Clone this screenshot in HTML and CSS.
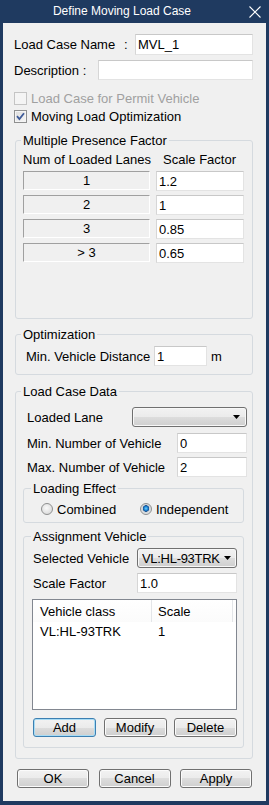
FILE: index.html
```html
<!DOCTYPE html>
<html lang="en">
<head>
    <meta charset="UTF-8">
    <meta name="viewport" content="width=device-width, initial-scale=1.0">
    <title>Define Moving Load Case</title>
    <link rel="stylesheet" href="styles.css">
</head>
<body>
    <div class="window">
        <div class="titlebar">
            <span class="title">Define Moving Load Case</span>
            <span class="close">
                <svg width="12" height="12" viewBox="0 0 12 12"><path d="M0.5 0.5 L11.5 11.5 M11.5 0.5 L0.5 11.5" stroke="#fff" stroke-width="1.1" fill="none"/></svg>
            </span>
        </div>

        <div class="dialog">
            <div class="row row-name">
                <span class="lbl lbl-name">Load Case Name</span><span class="colon">:</span>
                <input class="edit edit-name" type="text" value="MVL_1">
            </div>
            <div class="row row-desc">
                <span class="lbl lbl-desc">Description :</span>
                <input class="edit edit-desc" type="text" value="">
            </div>
            <div class="row check-row check-first disabled">
                <span class="check"></span><span>Load Case for Permit Vehicle</span>
            </div>
            <div class="row check-row">
                <span class="check checked">
                    <svg width="11" height="11" viewBox="0 0 11 11"><path d="M2 5.2 L4.4 8 L9 2.2" stroke="#3d5a98" stroke-width="1.8" fill="none"/></svg>
                </span><span>Moving Load Optimization</span>
            </div>

            <!-- Multiple Presence Factor -->
            <div class="group group-mpf">
                <div class="legend">Multiple Presence Factor</div>
                <div class="mpf-head"><span class="mpf-col">Num of Loaded Lanes</span><span>Scale Factor</span></div>
                <div class="mpf-row mpf-first"><span class="lane">1</span><input class="edit factor" type="text" value="1.2"></div>
                <div class="mpf-row"><span class="lane">2</span><input class="edit factor" type="text" value="1"></div>
                <div class="mpf-row"><span class="lane">3</span><input class="edit factor" type="text" value="0.85"></div>
                <div class="mpf-row"><span class="lane">&gt; 3</span><input class="edit factor" type="text" value="0.65"></div>
            </div>

            <!-- Optimization -->
            <div class="group group-opt">
                <div class="legend">Optimization</div>
                <div class="row opt-row">
                    <span class="lbl lbl-dist">Min. Vehicle Distance</span>
                    <input class="edit edit-dist" type="text" value="1">
                    <span class="unit">m</span>
                </div>
            </div>

            <!-- Load Case Data -->
            <div class="group group-lcd">
                <div class="legend">Load Case Data</div>
                <div class="row lcd-row lane-row">
                    <span class="lbl lbl-lane">Loaded Lane</span>
                    <div class="combo combo-lane">
                        <span class="combo-text"></span>
                        <svg width="7" height="4" viewBox="0 0 7 4"><path d="M0 0 L7 0 L3.5 4 Z" fill="#000"/></svg>
                    </div>
                </div>
                <div class="row lcd-row min-row">
                    <span class="lbl lbl-num">Min. Number of Vehicle</span>
                    <input class="edit edit-num" type="text" value="0">
                </div>
                <div class="row lcd-row max-row">
                    <span class="lbl lbl-num">Max. Number of Vehicle</span>
                    <input class="edit edit-num" type="text" value="2">
                </div>

                <div class="group inner-group group-effect">
                    <div class="legend">Loading Effect</div>
                    <div class="row radio-row">
                        <span class="radio"></span><span class="radio-lbl radio-lbl-first">Combined</span>
                        <span class="radio on"></span><span class="radio-lbl">Independent</span>
                    </div>
                </div>

                <div class="group inner-group group-assign">
                    <div class="legend">Assignment Vehicle</div>
                    <div class="row av-row vehicle-row">
                        <span class="lbl lbl-av">Selected Vehicle</span>
                        <div class="combo combo-vehicle">
                            <span class="combo-text">VL:HL-93TRK</span>
                            <svg width="7" height="4" viewBox="0 0 7 4"><path d="M0 0 L7 0 L3.5 4 Z" fill="#000"/></svg>
                        </div>
                    </div>
                    <div class="row av-row scale-row">
                        <span class="lbl lbl-av">Scale Factor</span>
                        <input class="edit edit-scale" type="text" value="1.0">
                    </div>
                    <div class="list">
                        <div class="list-head">
                            <span class="col col-class">Vehicle class</span>
                            <span class="col col-scale">Scale</span>
                        </div>
                        <div class="list-row">
                            <span class="col col-class">VL:HL-93TRK</span>
                            <span class="col col-scale">1</span>
                        </div>
                    </div>
                    <div class="btn-row">
                        <button class="btn btn-small default">Add</button>
                        <button class="btn btn-small">Modify</button>
                        <button class="btn btn-small">Delete</button>
                    </div>
                </div>
            </div>

            <div class="dialog-buttons">
                <button class="btn btn-main">OK</button>
                <button class="btn btn-main">Cancel</button>
                <button class="btn btn-main">Apply</button>
            </div>
        </div>
    </div>
</body>
</html>
```

FILE: styles.css
```css
/* General */
body {
    margin: 0;
    font-family: "Liberation Sans", Arial, sans-serif;
    font-size: 13px;
    color: #000;
    background: #1f3a60;
}
input, button {
    font-family: "Liberation Sans", Arial, sans-serif;
    font-size: 13px;
    color: #000;
}

/* Window frame */
.window {
    width: 269px;
    height: 805px;
    background: #1f3a60;
    display: flex;
    flex-direction: column;
}
.titlebar {
    height: 23px;
    display: flex;
    align-items: center;
    color: #fff;
}
.title {
    flex: 1;
    text-align: center;
    font-size: 12px;
    line-height: 23px;
}
.close {
    width: 25px;
    padding-left: 5px;
    box-sizing: border-box;
    display: flex;
    align-items: center;
}
.dialog {
    margin: 0 3px;
    height: 778px;
    background: #f0f0f0;
    padding: 11px 13px 0 11px;
    box-sizing: border-box;
}

/* Rows and labels */
.row {
    display: flex;
    align-items: center;
}
.lbl {
    white-space: nowrap;
    flex-shrink: 0;
}
.edit {
    background: #fff;
    border: 1px solid #e3e3e3;
    border-top-color: #c8c8c8;
    border-left-color: #d6d6d6;
    padding: 0 2px;
    margin: 0;
    box-sizing: border-box;
    outline: none;
}

.row-name {
    height: 21px;
}
.lbl-name {
    width: 110px;
}
.colon {
    width: 11px;
}
.edit-name {
    width: 118px;
    height: 21px;
}
.row-desc {
    height: 20px;
    margin-top: 5px;
}
.lbl-desc {
    width: 84px;
}
.edit-desc {
    width: 155px;
    height: 20px;
}

/* Check boxes */
.check-row {
    height: 18px;
}
.check-first {
    margin-top: 9px;
}
.check {
    width: 13px;
    height: 13px;
    box-sizing: border-box;
    border: 1px solid #8e8f8f;
    background: linear-gradient(135deg, #dcdcdc, #f6f6f6);
    box-shadow: inset 0 0 0 1px #f4f4f4;
    margin-right: 4px;
    display: flex;
    align-items: center;
    justify-content: center;
}
.disabled {
    color: #a0a0a0;
}
.disabled .check {
    border-color: #c4c4c4;
    background: #f4f4f4;
}

/* Group boxes */
.group {
    border: 1px solid #d5dadf;
    border-radius: 3px;
    box-sizing: border-box;
    margin-left: 1px;
}
.legend {
    display: table;
    margin: -8px 0 0 5px;
    padding: 0 2px;
    background: #f0f0f0;
    line-height: 15px;
}

/* Multiple Presence Factor */
.group-mpf {
    height: 179px;
    margin-top: 15px;
}
.mpf-head {
    display: flex;
    height: 18px;
    line-height: 18px;
    margin: 3px 0 0 7px;
}
.mpf-col {
    width: 140px;
}
.mpf-row {
    display: flex;
    height: 19px;
    margin: 5px 0 0 7px;
}
.mpf-first {
    margin-top: 2px;
}
.lane {
    width: 127px;
    height: 19px;
    box-sizing: border-box;
    border: 1px solid #fff;
    border-top-color: #a0a0a0;
    border-left-color: #a0a0a0;
    text-align: center;
    line-height: 17px;
}
.factor {
    width: 88px;
    height: 20px;
    margin-left: 6px;
}

/* Optimization */
.group-opt {
    height: 41px;
    margin-top: 15px;
}
.opt-row {
    height: 20px;
    margin: 4px 0 0 10px;
}
.lbl-dist {
    width: 128px;
}
.edit-dist {
    width: 53px;
    height: 20px;
}
.unit {
    margin-left: 4px;
}

/* Load Case Data */
.group-lcd {
    height: 368px;
    margin-top: 16px;
}
.lcd-row {
    margin-left: 11px;
    height: 20px;
}
.lane-row {
    margin-top: 8px;
}
.lbl-lane {
    width: 105px;
}
.min-row {
    margin-top: 6px;
}
.max-row {
    margin-top: 4px;
}
.lbl-num {
    width: 150px;
}
.edit-num {
    width: 70px;
    height: 20px;
}

.combo {
    height: 20px;
    box-sizing: border-box;
    border: 1px solid #707070;
    border-radius: 3px;
    background: linear-gradient(#f2f2f2, #ebebeb 50%, #dddddd 50%, #cfcfcf);
    box-shadow: inset 0 0 0 1px #f8f8f8;
    display: flex;
    align-items: center;
    padding: 0 6px 0 4px;
}
.combo svg {
    flex-shrink: 0;
    margin-left: 3px;
}
.combo-text {
    flex: 1;
    white-space: nowrap;
    overflow: hidden;
}
.combo-lane {
    width: 115px;
}

.inner-group {
    margin: 0 8px 0 7px;
}
.inner-group .legend {
    margin-left: 7px;
}

/* Loading Effect */
.group-effect {
    height: 35px;
    margin-top: 11px;
}
.radio-row {
    height: 16px;
    margin: 5px 0 0 17px;
}
.radio {
    width: 12px;
    height: 12px;
    box-sizing: border-box;
    border-radius: 50%;
    border: 1px solid #8e8f8f;
    background: radial-gradient(circle at 45% 40%, #fafafa, #d2d2d2);
}
.radio.on {
    background: radial-gradient(circle at 50% 45%, #6fd3ff 0, #1a7fd0 2px, #174d8c 3px, #cfd4d8 3.5px, #f4f4f4 100%);
}
.radio-lbl {
    margin-left: 4px;
}
.radio-lbl-first {
    width: 83px;
}

/* Assignment Vehicle */
.group-assign {
    height: 212px;
    margin-top: 13px;
}
.av-row {
    margin-left: 9px;
}
.lbl-av {
    width: 104px;
}
.vehicle-row {
    height: 20px;
    margin-top: 4px;
}
.combo-vehicle {
    width: 100px;
    padding-left: 4px;
    padding-right: 5px;
}
.combo-vehicle .combo-text {
    letter-spacing: -0.3px;
}
.scale-row {
    height: 20px;
    margin-top: 5px;
}
.edit-scale {
    width: 100px;
    height: 20px;
}

.list {
    width: 205px;
    height: 111px;
    margin: 6px 0 0 8px;
    box-sizing: border-box;
    border: 1px solid #828790;
    background: #fff;
}
.list-head {
    display: flex;
    height: 22px;
    background: linear-gradient(#fff, #fbfbfb);
}
.list-row {
    display: flex;
    height: 18px;
}
.col {
    display: flex;
    align-items: center;
    box-sizing: border-box;
    white-space: nowrap;
}
.col-class {
    width: 119px;
    padding-left: 7px;
}
.col-scale {
    width: 81px;
    padding-left: 6px;
}
.list-head .col {
    border-right: 1px solid #e3e5e8;
}

/* Buttons */
.btn {
    height: 19px;
    padding: 0;
    box-sizing: border-box;
    border: 1px solid #707070;
    border-radius: 3px;
    background: linear-gradient(#f2f2f2, #ebebeb 50%, #dddddd 50%, #cfcfcf);
    box-shadow: inset 0 0 0 1px #fbfbfb;
    line-height: 17px;
    cursor: pointer;
}
.btn.default {
    border-color: #3c7fb1;
    box-shadow: inset 0 0 0 1px #a8dcf5;
}
.btn-row {
    display: flex;
    justify-content: space-between;
    width: 204px;
    margin: 8px 0 0 9px;
}
.btn-small {
    width: 63px;
}
.dialog-buttons {
    display: flex;
    justify-content: space-between;
    width: 235px;
    margin: 10px 0 0 3px;
}
.btn-main {
    width: 72px;
}
```
